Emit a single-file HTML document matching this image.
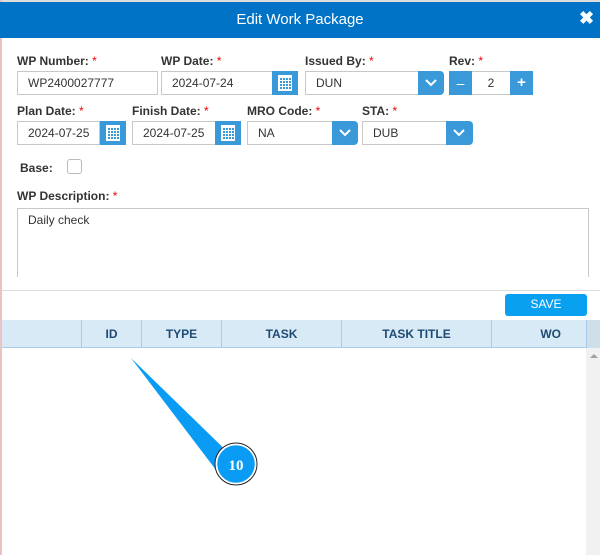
<!DOCTYPE html>
<html><head><style>
*{box-sizing:border-box;margin:0;padding:0}
body{width:600px;height:555px;overflow:hidden;background:#fff;font-family:"Liberation Sans",Arial,sans-serif;font-size:12px;color:#333;position:relative}
.a{position:absolute}
.hdr{left:0;top:2px;width:600px;height:36px;background:#0073c6;color:#fff;font-size:15px;text-align:center;line-height:36px}
.lbl{font-size:12px;font-weight:bold;color:#333}
.lbl b{color:#e00;font-weight:normal}
.in{border:1px solid #c8c8c8;height:24px;line-height:22px;padding-left:10px;font-size:12px;color:#333;background:#fff}
.btn{background:#3a9ad9;height:24px}
.cal{background:#3a9ad9;width:26px;height:24px}
.cal i{position:absolute;left:6px;top:4px;width:14px;height:16px;border:1px solid #fff;border-top-width:3px;background:repeating-linear-gradient(90deg,#fff 0 1px,transparent 1px 3px),repeating-linear-gradient(0deg,#fff 0 1px,transparent 1px 3px)}
.dd svg{position:absolute;left:7px;top:7px}
.col{top:320px;height:28px;border-left:1px solid #a9cbe6;line-height:28px;text-align:center;color:#1e4b73;font-weight:bold;font-size:12px}
</style></head><body>
<div class="a" style="left:0;top:0;width:600px;height:2px;background:#ddd"></div>
<div class="a" style="left:0;top:0;width:2px;height:555px;background:#e9c4c4"></div>
<div class="a hdr">Edit Work Package</div>
<div class="a" style="left:579px;top:8px;color:#fff;font-size:18px;font-weight:bold">✖</div>

<div class="a lbl" style="left:17px;top:54px">WP Number: <b>*</b></div>
<div class="a lbl" style="left:161px;top:54px">WP Date: <b>*</b></div>
<div class="a lbl" style="left:305px;top:54px">Issued By: <b>*</b></div>
<div class="a lbl" style="left:449px;top:54px">Rev: <b>*</b></div>
<div class="a in" style="left:17px;top:71px;width:141px">WP2400027777</div>
<div class="a in" style="left:161px;top:71px;width:112px">2024-07-24</div>
<div class="a cal" style="left:272px;top:71px"><i></i></div>
<div class="a in" style="left:305px;top:71px;width:115px">DUN</div>
<div class="a btn dd" style="left:418px;top:71px;width:26px;border-radius:0 4px 4px 0"><svg width="12" height="10"><path d="M1 2l5 5 5-5" stroke="#fff" stroke-width="2" fill="none"/></svg></div>
<div class="a btn" style="left:449px;top:71px;width:23px;color:#fff;text-align:center;line-height:24px;font-size:14px">–</div>
<div class="a in" style="left:472px;top:71px;width:38px;text-align:center;padding:0;border:none;border-top:1px solid #c8c8c8;border-bottom:1px solid #c8c8c8">2</div>
<div class="a btn" style="left:510px;top:71px;width:23px;color:#fff;text-align:center;line-height:24px;font-size:15px;font-weight:bold">+</div>

<div class="a lbl" style="left:17px;top:104px">Plan Date: <b>*</b></div>
<div class="a lbl" style="left:132px;top:104px">Finish Date: <b>*</b></div>
<div class="a lbl" style="left:247px;top:104px">MRO Code: <b>*</b></div>
<div class="a lbl" style="left:362px;top:104px">STA: <b>*</b></div>
<div class="a in" style="left:17px;top:121px;width:83px">2024-07-25</div>
<div class="a cal" style="left:100px;top:121px"><i></i></div>
<div class="a in" style="left:132px;top:121px;width:84px">2024-07-25</div>
<div class="a cal" style="left:215px;top:121px"><i></i></div>
<div class="a in" style="left:247px;top:121px;width:87px">NA</div>
<div class="a btn dd" style="left:332px;top:121px;width:26px;border-radius:0 4px 4px 0"><svg width="12" height="10"><path d="M1 2l5 5 5-5" stroke="#fff" stroke-width="2" fill="none"/></svg></div>
<div class="a in" style="left:362px;top:121px;width:86px">DUB</div>
<div class="a btn dd" style="left:446px;top:121px;width:27px;border-radius:0 4px 4px 0"><svg width="12" height="10"><path d="M1 2l5 5 5-5" stroke="#fff" stroke-width="2" fill="none"/></svg></div>

<div class="a lbl" style="left:20px;top:161px">Base:</div>
<div class="a" style="left:67px;top:159px;width:15px;height:15px;border:1px solid #bbb;border-radius:3px"></div>
<div class="a lbl" style="left:17px;top:189px">WP Description: <b>*</b></div>
<div class="a" style="left:17px;top:208px;width:572px;height:69px;border:1px solid #c8c8c8;border-bottom:none;padding:4px 10px">Daily check</div>
<div class="a" style="left:2px;top:290px;width:598px;height:1px;background:#ddd"></div>
<div class="a" style="left:505px;top:294px;width:82px;height:22px;background:#0aa0f0;border-radius:3px;color:#fff;text-align:center;line-height:21px;font-size:12px">SAVE</div>

<div class="a" style="left:2px;top:320px;width:598px;height:28px;background:#d9eaf7;border-bottom:1px solid #a9cbe6"></div>
<div class="a col" style="left:81px;width:60px">ID</div>
<div class="a col" style="left:141px;width:80px">TYPE</div>
<div class="a col" style="left:221px;width:120px">TASK</div>
<div class="a col" style="left:341px;width:150px">TASK TITLE</div>
<div class="a col" style="left:491px;width:96px;text-align:right;padding-right:26px">WO</div>
<div class="a" style="left:586px;top:320px;width:14px;height:28px;background:#cfdfea;border-left:1px solid #a9cbe6"></div>
<div class="a" style="left:586px;top:348px;width:14px;height:207px;background:#f1f1f1"></div>
<div class="a" style="left:590px;top:354px;width:0;height:0;border-left:4px solid transparent;border-right:4px solid transparent;border-bottom:4px solid #a0a0a0"></div>

<svg class="a" style="left:0;top:0" width="600" height="555">
<polygon points="131,358 242,466 216,470" fill="#0a9cf5"/>
<circle cx="236" cy="464" r="20" fill="#0a9cf5" stroke="#fff" stroke-width="2.5"/>
<circle cx="236" cy="464" r="21" fill="none" stroke="#222" stroke-width="1"/>
<text x="236" y="470" text-anchor="middle" font-family="Liberation Serif,serif" font-weight="bold" font-size="15" fill="#fff">10</text>
</svg>
</body></html>
